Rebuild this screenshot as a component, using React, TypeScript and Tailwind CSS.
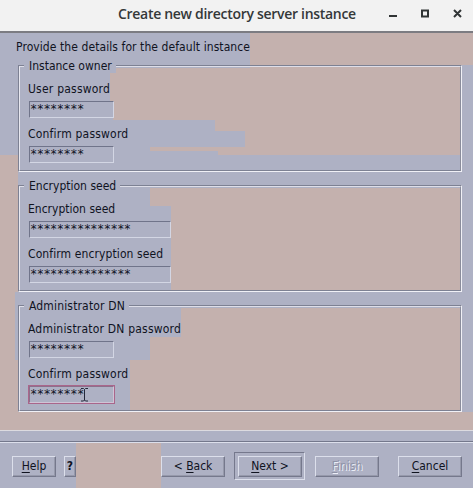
import React from "react";

const font = "font-['DejaVu_Sans_Condensed','DejaVu_Sans',sans-serif] [font-stretch:condensed]";

function Backdrop() {
  return (
    <svg className="absolute inset-0" width="473" height="488" fill="#c4b1ae" aria-hidden="true">
      <path d="M250 33H473V65H460V155H218V151H150V147H245V131H215V120H113V102H110V68H250Z" />
      <path d="M0 155H18V292H15V360H18V412H473V430H0Z" />
      <path d="M150 188H460V290H171V206H150Z" />
      <path d="M181 308H460V410H130V360H150V337H181Z" />
      <path d="M76 443H161V488H76Z" />
    </svg>
  );
}

function Field({ label, value, width, spacing, focused }: { label: string; value: string; width: string; spacing: string; focused?: boolean }) {
  return (
    <div className="h-[45px]">
      <div className={`h-[19px] whitespace-nowrap leading-[14px] ${spacing}`}>
        <span>{label}</span>
      </div>
      <div
        className={`relative ml-px h-[17px] border ${width} ${
          focused
            ? "border-t-[#8d6f8b] border-l-[#8d6f8b] border-r-[#d0c4d6] border-b-[#d0c4d6] outline outline-[#a9668b]"
            : "border-t-[#70748a] border-l-[#70748a] border-r-[#d3d6e4] border-b-[#d3d6e4]"
        }`}
      >
        <span className="block font-['DejaVu_Sans_Mono',monospace] text-[12px] leading-[15px] tracking-[-0.52px]">{value}</span>
        {focused && (
          <svg className="absolute left-[50px] top-px" width="9" height="14" fill="none" stroke="#25283a" aria-hidden="true">
            <path d="M1 .5H3.5L4.5 1.5L5.5 .5H8M4.5 1.5V12M1 13H3.5L4.5 12L5.5 13H8" />
          </svg>
        )}
      </div>
    </div>
  );
}

function Group({ title, spacing = "", children }: { title: string; spacing?: string; children: React.ReactNode }) {
  return (
    <section className="relative h-[107px] w-[444px] border border-t-[#7d8193] border-l-[#7d8193] border-r-[#f0f0f6] border-b-[#f0f0f6]">
      <div className="h-full border border-t-[#dedee8] border-l-[#e8e8f0] border-r-[#8a8c9b] border-b-[#7d8193] pl-2 pt-[15px]">
        {children}
      </div>
      <h2 className={`absolute -top-[7px] left-[5px] whitespace-nowrap bg-[#aeb1c4] pl-[5px] pr-1 leading-[14px] ${spacing}`}>{title}</h2>
    </section>
  );
}

function Button({ children, className = "" }: { children: React.ReactNode; className?: string }) {
  return (
    <button
      className={`h-[21px] whitespace-nowrap border border-t-[#dcdfeb] border-l-[#dcdfeb] border-r-[#75788c] border-b-[#75788c] text-center leading-[19px] shadow-[inset_-1px_-1px_#9699ab] ${className}`}
    >
      {children}
    </button>
  );
}

const key = "underline decoration-1 underline-offset-2";

export default function App() {
  return (
    <div className={`relative flex h-[488px] w-[473px] flex-col overflow-hidden bg-[#aeb1c4] text-[12px] text-[#10131f] ${font}`}>
      <Backdrop />
      <header className="relative flex h-[33px] shrink-0 items-start border-b-2 border-[#7c7c82] bg-[#f2f2f2] pl-[118px] text-[#343839]">
        <h1 className="w-[274px] whitespace-nowrap font-['Open_Sans',sans-serif] text-[14px] font-semibold leading-[27px] tracking-[-0.3px] [font-stretch:normal]">
          Create new directory server instance
        </h1>
        <svg className="overflow-visible" width="80" height="27" fill="none" stroke="#303435" strokeWidth="2" aria-hidden="true">
          <path d="M-3 16H5M30 10.5H36V16.5H30ZM62 10L69 17M69 10L62 17" />
        </svg>
      </header>
      <main className="relative h-[397px] shrink-0 pl-[18px]">
        <p className="-ml-0.5 h-8 whitespace-nowrap pt-[7px] leading-[14px] tracking-[0.08px]">Provide the details for the default instance</p>
        <div className="flex flex-col gap-[13px]">
          <Group title="Instance owner">
            <Field label="User password" value="********" width="w-[85px]" spacing="tracking-[0.22px]" />
            <Field label="Confirm password" value="********" width="w-[85px]" spacing="tracking-[0.2px]" />
          </Group>
          <Group title="Encryption seed">
            <Field label="Encryption seed" value="***************" width="w-[142px]" spacing="tracking-normal" />
            <Field label="Confirm encryption seed" value="***************" width="w-[142px]" spacing="tracking-[0.1px]" />
          </Group>
          <Group title="Administrator DN" spacing="tracking-[0.16px]">
            <Field label="Administrator DN password" value="********" width="w-[85px]" spacing="tracking-[0.2px]" />
            <Field label="Confirm password" value="********" width="w-[85px]" spacing="tracking-[0.2px]" focused />
          </Group>
        </div>
      </main>
      <div className="relative h-[13px] shrink-0 border-b border-t border-b-[#dcdfeb] border-t-[#dcdbe0] shadow-[inset_0_-1px_#74788c]" />
      <footer className="relative flex h-[45px] items-start pl-3 pt-[13px]">
        <Button className="w-11"><span className={key}>H</span>elp</Button>
        <Button className="ml-2 w-3 font-bold">?</Button>
        <Button className="ml-[85px] w-16">&lt; <span className={key}>B</span>ack</Button>
        <div className="-mt-1 ml-[9px] h-7 w-[71px] border border-t-[#75788c] border-l-[#75788c] border-r-[#dcdfeb] border-b-[#dcdfeb] pl-[3px] pt-[3px] leading-none">
          <Button className="block w-16"><span className={key}>N</span>ext &gt;</Button>
        </div>
        <Button className="ml-2.5 w-16 text-[#8f93a7] [text-shadow:1px_1px_#eceef7]"><span className={key}>F</span>inish</Button>
        <Button className="ml-[19px] w-16"><span className={key}>C</span>ancel</Button>
      </footer>
    </div>
  );
}
